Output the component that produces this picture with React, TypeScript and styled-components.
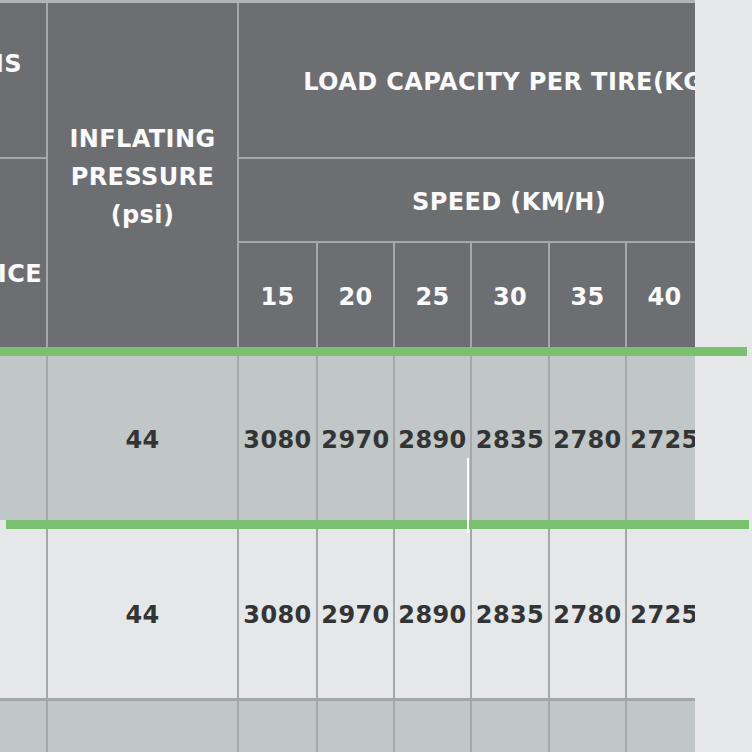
import React from "react";
import styled, { createGlobalStyle } from "styled-components";

const GlobalStyle = createGlobalStyle`
  html, body {
    margin: 0;
    padding: 0;
    background: #e6e7e8;
  }
  body {
    font-family: "DejaVu Sans", "Liberation Sans", sans-serif;
  }
`;

const COLS = "220px 189px 77px 75px 75px 76px 75px 75px 75px";
const SHIFT = -174;

const Stage = styled.div`
  position: relative;
  width: 752px;
  height: 752px;
  overflow: hidden;
  display: flex;
  flex-direction: column;
  background: #e6e7e8;
`;

const Clip = styled.div`
  width: 695px;
  overflow: hidden;
  display: flex;
  flex: none;
`;

const HeaderGrid = styled.div`
  display: grid;
  grid-template-columns: ${COLS};
  grid-template-rows: 154px 82px 104px;
  gap: 2px;
  width: max-content;
  margin-left: ${SHIFT}px;
  background: #a6a8ab;
  border-top: 3px solid #b2b4b6;
  flex: none;
`;

const HeadCell = styled.div<{ $col?: string; $row?: string }>`
  grid-column: ${(p) => p.$col ?? "auto"};
  grid-row: ${(p) => p.$row ?? "auto"};
  background: #6d6e71;
  color: #fafafa;
  display: flex;
  align-items: center;
  justify-content: center;
  text-align: center;
  padding-top: 4px;
  font-size: 24px;
  font-weight: 700;
  line-height: 38px;
  letter-spacing: 0.4px;
  white-space: nowrap;
`;

const EdgeLabel = styled(HeadCell)<{ $padTop: number; $padRight: number }>`
  align-items: flex-start;
  justify-content: flex-end;
  padding-top: ${(p) => p.$padTop}px;
  padding-right: ${(p) => p.$padRight}px;
`;

const GreenRule = styled.div<{ $inset: number; $width: number }>`
  flex: none;
  height: 9px;
  width: ${(p) => p.$width}px;
  margin-left: ${(p) => p.$inset}px;
  background: #79c06f;
`;

const BodyRow = styled.div<{ $h: number; $rule?: boolean }>`
  display: grid;
  grid-template-columns: ${COLS};
  column-gap: 2px;
  width: max-content;
  margin-left: ${SHIFT}px;
  height: ${(p) => p.$h}px;
  background: #a4a8a9;
  border-bottom: ${(p) => (p.$rule ? "3px solid #a5a8a9" : "none")};
  flex: none;
`;

const BodyCell = styled.div<{ $shade: boolean }>`
  background: ${(p) => (p.$shade ? "#c1c6c6" : "#e6e7e8")};
  display: flex;
  align-items: center;
  justify-content: center;
  padding-top: 3px;
  color: #333435;
  font-size: 24px;
  font-weight: 700;
  letter-spacing: 0.4px;
  white-space: nowrap;
`;

const Glint = styled.div`
  position: absolute;
  left: 467px;
  top: 458px;
  width: 2px;
  height: 75px;
  background: #ffffff;
`;

const speeds = ["15", "20", "25", "30", "35", "40", "45"];
const loads = ["3080", "2970", "2890", "2835", "2780", "2725", "2670"];

function DataRow({ shade, h, rule, values }: { shade: boolean; h: number; rule?: boolean; values?: string[] }) {
  const cells = values ?? ["", "", ...speeds.map(() => "")];
  return (
    <Clip>
      <BodyRow $h={h} $rule={rule}>
        {cells.map((v, i) => (
          <BodyCell key={i} $shade={shade}>
            {v}
          </BodyCell>
        ))}
      </BodyRow>
    </Clip>
  );
}

export default function App() {
  const rowValues = ["", "44", ...loads];
  return (
    <>
      <GlobalStyle />
      <Stage>
        <Clip>
          <HeaderGrid>
            <EdgeLabel $col="1" $row="1" $padTop={42} $padRight={24}>
              DIMENSIONS
            </EdgeLabel>
            <HeadCell $col="2" $row="1 / span 3">
              INFLATING
              <br />
              PRESSURE
              <br />
              (psi)
            </HeadCell>
            <HeadCell $col="3 / span 7" $row="1">
              LOAD CAPACITY PER TIRE(KG)
            </HeadCell>
            <EdgeLabel $col="1" $row="2 / span 2" $padTop={96} $padRight={4}>
              SERVICE
            </EdgeLabel>
            <HeadCell $col="3 / span 7" $row="2">
              SPEED (KM/H)
            </HeadCell>
            {speeds.map((s) => (
              <HeadCell key={s} $row="3">
                {s}
              </HeadCell>
            ))}
          </HeaderGrid>
        </Clip>
        <GreenRule $inset={0} $width={747} />
        <DataRow shade h={164} values={rowValues} />
        <GreenRule $inset={6} $width={743} />
        <DataRow shade={false} h={169} rule values={rowValues} />
        <DataRow shade h={80} />
        <Glint />
      </Stage>
    </>
  );
}
